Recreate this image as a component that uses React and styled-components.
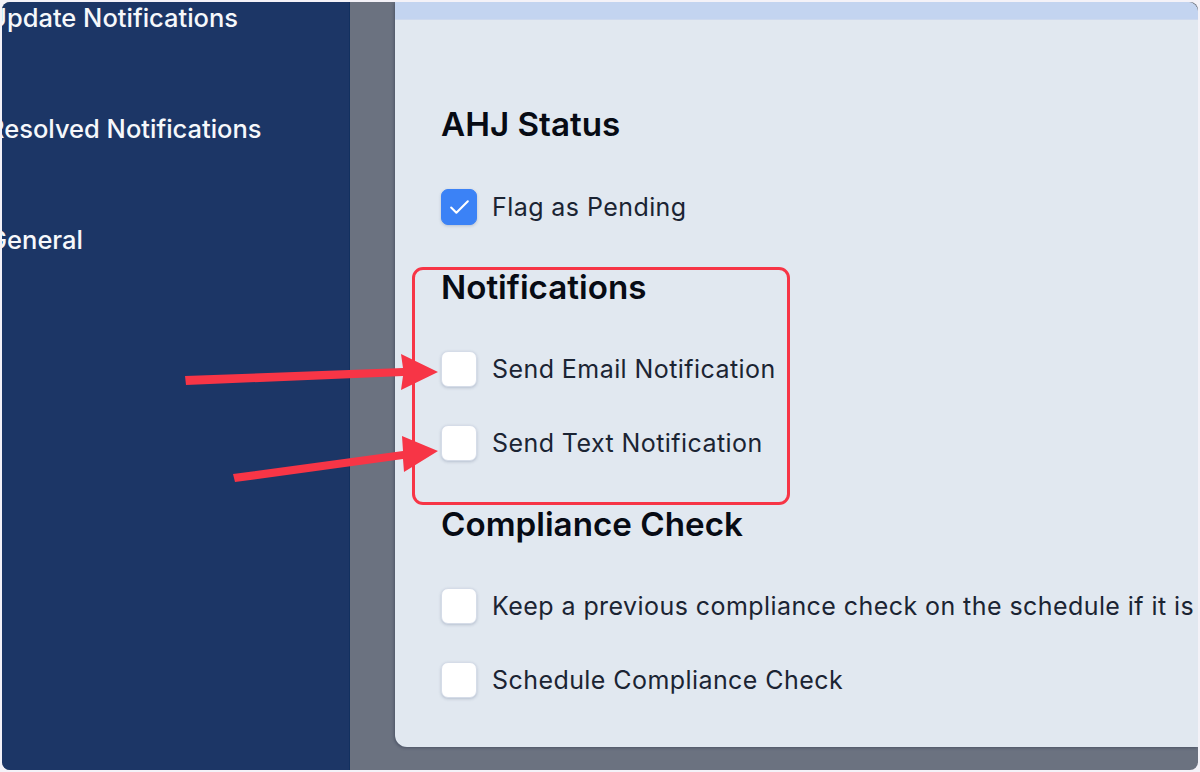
import React from 'react'
import styled, { createGlobalStyle } from 'styled-components'
import { Check } from 'lucide-react'

const GlobalStyle = createGlobalStyle`
  html, body {
    margin: 0;
    padding: 0;
    background: #f4f2f8;
  }
  body {
    font-family: Inter, "Liberation Sans", sans-serif;
  }
`

const Frame = styled.div`
  position: relative;
  display: flex;
  width: 1196px;
  height: 768px;
  margin: 2px;
  border-radius: 8px;
  overflow: hidden;
  background: #6b7280;
`

const Sidebar = styled.nav`
  flex: none;
  width: 348px;
  padding-top: 1px;
  background: #1c3666;
  border-right: 1px solid #12305f;
  box-sizing: border-box;
  overflow: hidden;
`

const NavList = styled.div`
  display: flex;
  flex-direction: column;
  gap: 81px;
  margin-left: -14px;
`

const NavItem = styled.div`
  color: #f6f8fb;
  font-size: 25.5px;
  font-weight: 500;
  line-height: 30px;
  white-space: nowrap;
`

const Main = styled.main`
  flex: 1;
  display: flex;
  min-width: 0;
  padding: 0 0 23px 45px;
`

const Panel = styled.section`
  flex: 1;
  display: flex;
  flex-direction: column;
  min-width: 0;
  background: #e1e8f0;
  border-radius: 0 10px 0 12px;
  box-shadow: -1px 1px 3px rgba(40, 48, 70, 0.45);
  overflow: hidden;
`

const Band = styled.div`
  flex: none;
  height: 18px;
  background: #c3d4f0;
  border-bottom: 1px solid #cdd9ee;
  box-sizing: border-box;
`

const Content = styled.div`
  display: flex;
  flex-direction: column;
  padding: 84px 0 0 46px;
`

const Heading = styled.h2`
  margin: 0 0 ${props => props.$gap}px;
  color: #070b14;
  font-size: 33.2px;
  font-weight: 600;
  line-height: 40px;
  white-space: nowrap;
`

const Row = styled.label`
  display: flex;
  align-items: center;
  gap: 15px;
  height: 36px;
  margin-bottom: ${props => props.$gap}px;
  color: #1b2433;
  font-size: 25px;
  letter-spacing: 0.43px;
  white-space: nowrap;
`

const Box = styled.span`
  flex: none;
  display: flex;
  align-items: center;
  justify-content: center;
  width: 36px;
  height: 36px;
  box-sizing: border-box;
  color: #fff;
  background: ${props => (props.$checked ? '#3b82f6' : '#fff')};
  border: 1px solid ${props => (props.$checked ? '#3b82f6' : '#d5dce8')};
  border-radius: 7px;
  box-shadow: 0 1px 3px rgba(60, 75, 110, 0.25);
`

const Highlight = styled.div`
  position: absolute;
  left: 410px;
  top: 265px;
  width: 378px;
  height: 238px;
  box-sizing: border-box;
  border: 3px solid #f73546;
  border-radius: 11px;
`

const Arrows = styled.svg`
  position: absolute;
  left: -2px;
  top: -2px;
  width: 1200px;
  height: 772px;
  pointer-events: none;
`

const CheckItem = ({ checked, gap, children }) => (
  <Row $gap={gap}>
    <Box $checked={checked}>{checked && <Check size={25} strokeWidth={2} />}</Box>
    {children}
  </Row>
)

const App = () => {
  return (
    <>
      <GlobalStyle />
      <Frame>
        <Sidebar>
          <NavList>
            <NavItem>Update Notifications</NavItem>
            <NavItem>Resolved Notifications</NavItem>
            <NavItem>General</NavItem>
          </NavList>
        </Sidebar>
        <Main>
          <Panel>
            <Band />
            <Content>
              <Heading $gap={45}>AHJ Status</Heading>
              <CheckItem checked gap={42}>Flag as Pending</CheckItem>
              <Heading $gap={44}>Notifications</Heading>
              <CheckItem gap={38}>Send Email Notification</CheckItem>
              <CheckItem gap={43}>Send Text Notification</CheckItem>
              <Heading $gap={44}>Compliance Check</Heading>
              <CheckItem gap={38}>Keep a previous compliance check on the schedule if it is</CheckItem>
              <CheckItem gap={0}>Schedule Compliance Check</CheckItem>
            </Content>
          </Panel>
        </Main>
        <Highlight />
        <Arrows viewBox="0 0 1200 772">
          <polygon fill="#f73546" points="185,376 403,368 401,354 438,372 401,390 403,376 186,385" />
          <polygon fill="#f73546" points="233,474 403,451 402,436 438,451 404,472 403,459 235,482" />
        </Arrows>
      </Frame>
    </>
  )
}

export default App
